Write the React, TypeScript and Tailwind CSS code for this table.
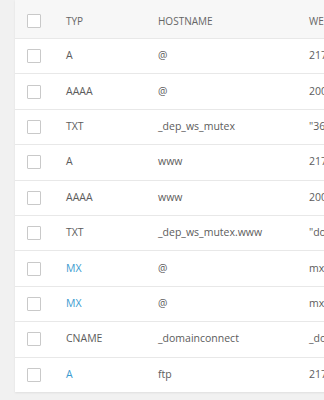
import React from "react";

type Rec = { type: string; host: string; value: string; link?: boolean };

const records: Rec[] = [
  { type: "A", host: "@", value: "217.160.0.1" },
  { type: "AAAA", host: "@", value: "2001:8d8:100f" },
  { type: "TXT", host: "_dep_ws_mutex", value: "\"36a1b2c3\"" },
  { type: "A", host: "www", value: "217.160.0.1" },
  { type: "AAAA", host: "www", value: "2001:8d8:100f" },
  { type: "TXT", host: "_dep_ws_mutex.www", value: "\"done\"" },
  { type: "MX", host: "@", value: "mx00.ionos.de", link: true },
  { type: "MX", host: "@", value: "mx01.ionos.de", link: true },
  { type: "CNAME", host: "_domainconnect", value: "_domainconnect.ionos.com" },
  { type: "A", host: "ftp", value: "217.160.0.1", link: true },
];

function Box() {
  return <span className="block w-[14px] h-[14px] border border-[#c9c9c9] rounded-[1px] bg-white" />;
}

export default function App() {
  return (
    <div
      className="w-[324px] h-[400px] overflow-hidden bg-[#f1f1f1] pl-[15px]"
      style={{ fontFamily: '"Open Sans", "Noto Sans", sans-serif' }}
    >
      <div className="w-[400px] bg-white shadow-[0_1px_2px_rgba(0,0,0,0.08)]">
        <div className="flex items-center h-[38px] pt-[4px] bg-[#f7f7f7] text-[10px] uppercase text-[#666] whitespace-nowrap">
          <div className="w-[51px] shrink-0 pl-[12px]">
            <Box />
          </div>
          <div className="w-[92px] shrink-0">Typ</div>
          <div className="w-[151px] shrink-0">Hostname</div>
          <div className="shrink-0">Wert</div>
        </div>
        {records.map((r, i) => (
          <div
            key={i}
            className="flex items-center h-[35.4px] border-t border-[#e8e8e8] text-[10.5px] text-[#5c5c5c] whitespace-nowrap"
          >
            <div className="w-[51px] shrink-0 pl-[12px]">
              <Box />
            </div>
            <div className={"w-[92px] shrink-0 " + (r.link ? "text-[#3b9bd0]" : "")}>{r.type}</div>
            <div className="w-[151px] shrink-0">{r.host}</div>
            <div className="shrink-0">{r.value}</div>
          </div>
        ))}
      </div>
    </div>
  );
}
